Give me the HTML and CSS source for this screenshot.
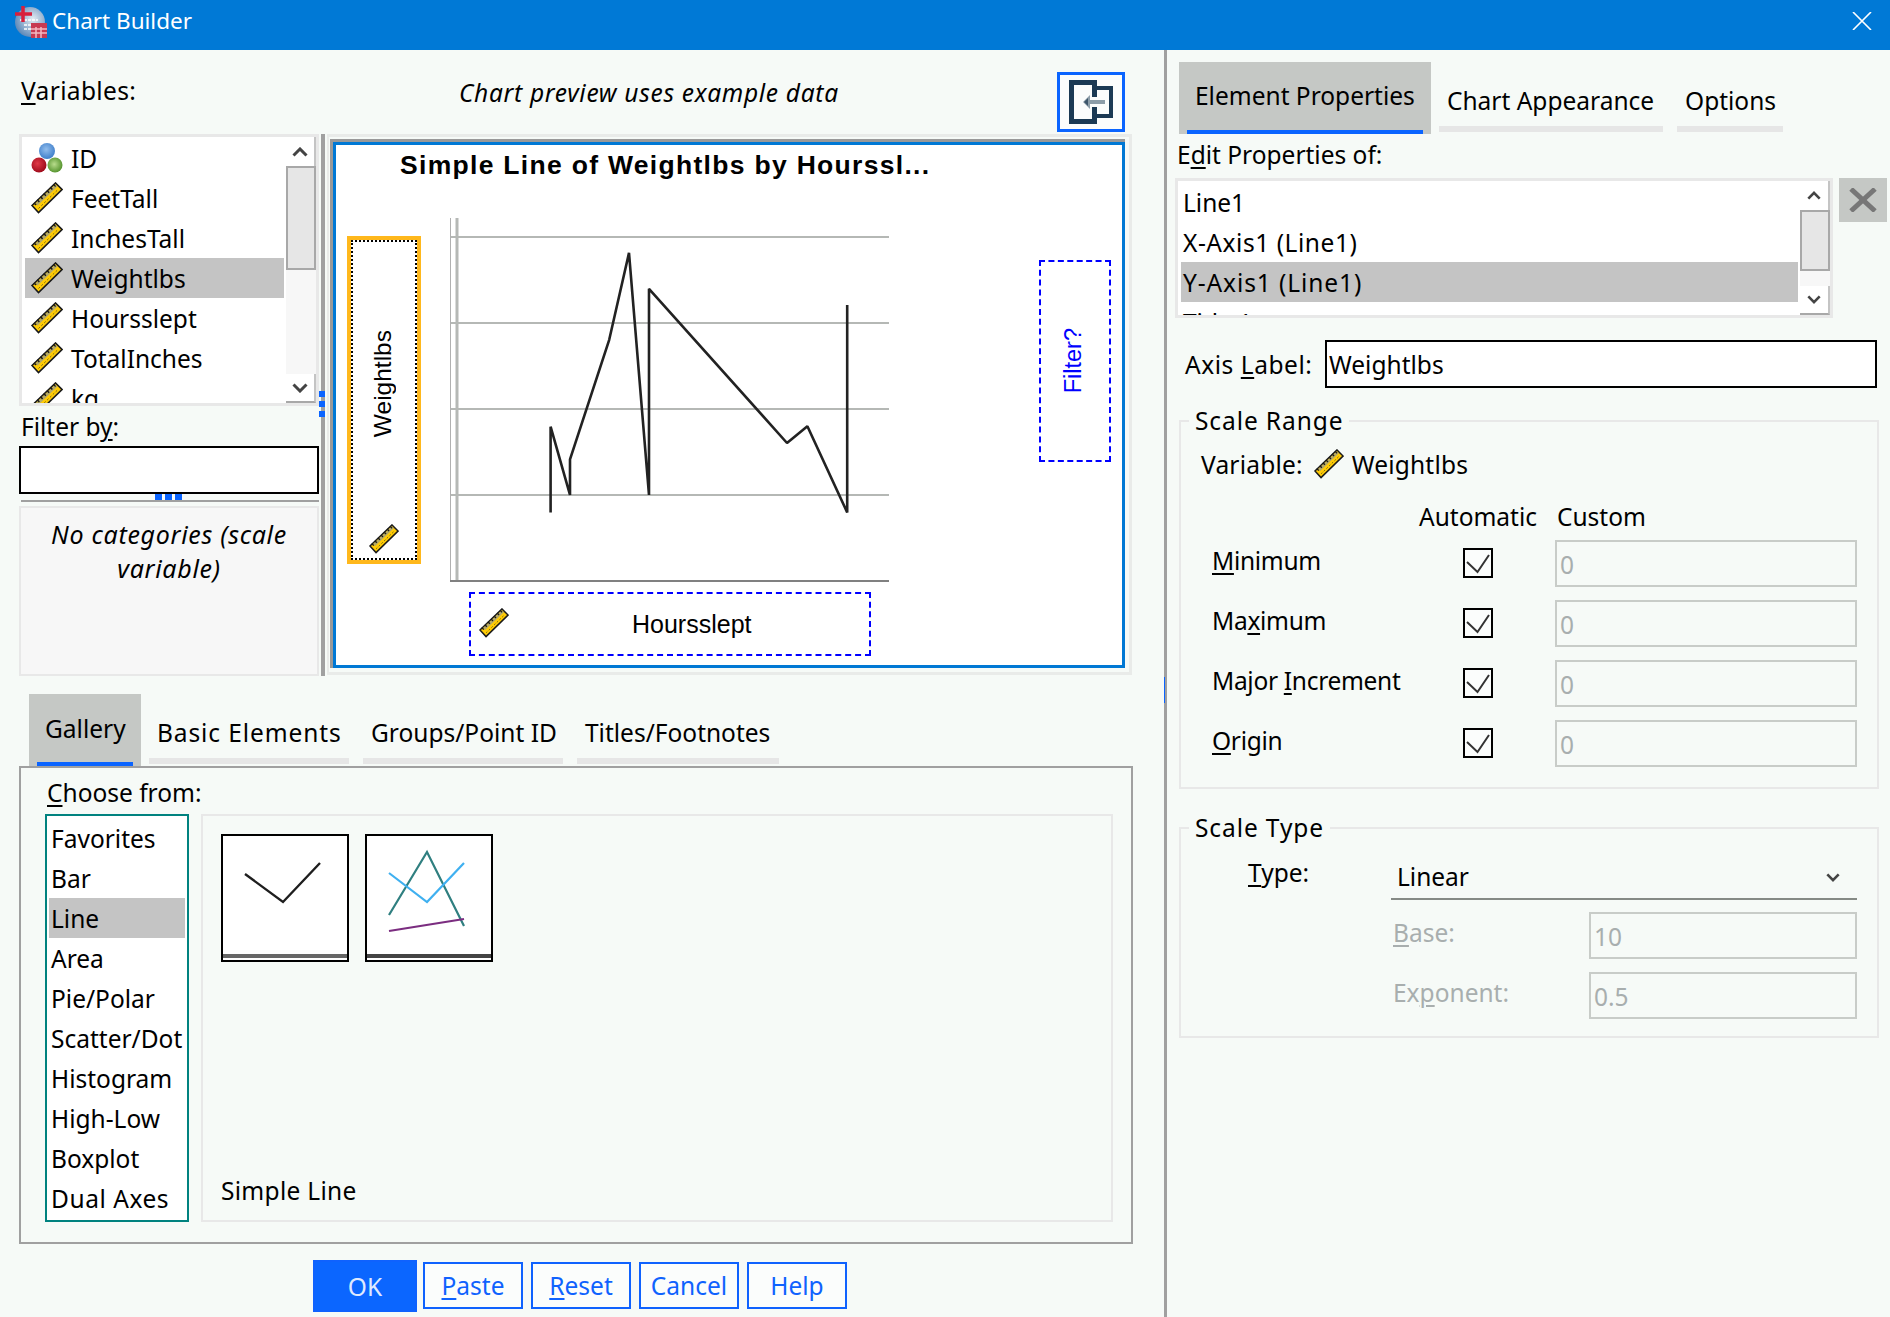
FILE: index.html
```html
<!DOCTYPE html>
<html lang="en">
<head>
    <meta charset="UTF-8">
    <title>Chart Builder</title>
    <link rel="stylesheet" href="styles.css">
</head>
<body>
    <!-- Iconos compartidos -->
    <svg class="defs" width="0" height="0">
        <defs>
            <symbol id="ruler" viewBox="0 0 32 32">
                <polygon points="1,23.5 24.5,1 31,7.5 7.5,30.5" fill="#ffcb05" stroke="#1a1a1a" stroke-width="1.6"/>
                <line x1="5.5" y1="22.5" x2="25.5" y2="3.5" stroke="#b3a868" stroke-width="3"/>
                <line x1="3.5" y1="22.5" x2="24" y2="3" stroke="#1a1a1a" stroke-width="3" stroke-dasharray="1.5 3"/>
                <line x1="7.5" y1="26.5" x2="27" y2="7.5" stroke="#7a6a10" stroke-width="1" stroke-dasharray="2 2"/>
            </symbol>
            <symbol id="chev-up" viewBox="0 0 16 10">
                <path d="M1.5 8.5 L8 2 L14.5 8.5" fill="none" stroke="#444" stroke-width="3"/>
            </symbol>
            <symbol id="chev-down" viewBox="0 0 16 10">
                <path d="M1.5 1.5 L8 8 L14.5 1.5" fill="none" stroke="#444" stroke-width="3"/>
            </symbol>
            <radialGradient id="ball-blue" cx="0.45" cy="0.4" r="0.6">
                <stop offset="0" stop-color="#92bdec"/><stop offset="1" stop-color="#3f7fcb"/>
            </radialGradient>
            <radialGradient id="ball-red" cx="0.4" cy="0.4" r="0.6">
                <stop offset="0" stop-color="#e03a48"/><stop offset="1" stop-color="#a00c1c"/>
            </radialGradient>
            <radialGradient id="ball-green" cx="0.45" cy="0.45" r="0.6">
                <stop offset="0" stop-color="#b8dc8c"/><stop offset="1" stop-color="#4f8f28"/>
            </radialGradient>
            <radialGradient id="globe" cx="0.6" cy="0.4" r="0.7">
                <stop offset="0" stop-color="#e4ecf2"/><stop offset="1" stop-color="#4f7eb2"/>
            </radialGradient>
        </defs>
    </svg>

    <header class="titlebar">
        <svg class="app-icon" width="34" height="34" viewBox="0 0 34 34">
            <circle cx="16" cy="18" r="15" fill="url(#globe)"/>
            <path d="M6 16h18M10 21h14M10 25h14" stroke="#fff" stroke-width="1.5" stroke-dasharray="3 1"/>
            <path d="M9 2v16M1 10h17" stroke="#d8203c" stroke-width="3.5"/>
            <rect x="17" y="19" width="16" height="15" fill="#c73a52"/>
            <path d="M17 25h16M17 29h16M22 23v11M27 23v11" stroke="#f3b9c2" stroke-width="1.5"/>
        </svg>
        <span class="app-title">Chart Builder</span>
        <svg class="close-x" width="20" height="18" viewBox="0 0 20 18">
            <path d="M1 0 L19 18 M19 0 L1 18" stroke="#fff" stroke-width="1.6"/>
        </svg>
    </header>

    <div class="dialog">
        <main class="left">
            <div class="left-top">
                <section class="vars">
                    <div class="vars-label"><u>V</u>ariables:</div>
                    <div class="listbox vars-list">
                        <ul class="rows">
                            <li>
                                <svg class="var-icon" width="32" height="32" viewBox="0 0 32 32">
                                    <circle cx="16" cy="9" r="8" fill="url(#ball-blue)"/>
                                    <circle cx="8" cy="23" r="7.5" fill="url(#ball-red)"/>
                                    <circle cx="24" cy="23" r="7.5" fill="url(#ball-green)"/>
                                </svg>ID</li>
                            <li><svg class="var-icon" width="32" height="32"><use href="#ruler"/></svg>FeetTall</li>
                            <li><svg class="var-icon" width="32" height="32"><use href="#ruler"/></svg>InchesTall</li>
                            <li class="selected"><svg class="var-icon" width="32" height="32"><use href="#ruler"/></svg>Weightlbs</li>
                            <li><svg class="var-icon" width="32" height="32"><use href="#ruler"/></svg>Hoursslept</li>
                            <li><svg class="var-icon" width="32" height="32"><use href="#ruler"/></svg>TotalInches</li>
                            <li><svg class="var-icon" width="32" height="32"><use href="#ruler"/></svg>kg</li>
                        </ul>
                        <div class="scrollbar">
                            <div class="sb-btn"><svg width="16" height="10"><use href="#chev-up"/></svg></div>
                            <div class="sb-thumb vars-thumb"></div>
                            <div class="sb-track"></div>
                            <div class="sb-btn sb-btn-down"><svg width="16" height="10"><use href="#chev-down"/></svg></div>
                        </div>
                    </div>
                    <div class="filter-label">Filter b<u>y</u>:</div>
                    <div class="text-input filter-input"></div>
                    <div class="h-split"><span class="dots"><i></i><i></i><i></i></span></div>
                    <div class="categories">No categories (scale variable)</div>
                </section>

                <div class="v-split"><span class="dots dots-v"><i></i><i></i><i></i></span></div>

                <section class="preview-col">
                    <div class="preview-top">
                        <span class="preview-note">Chart preview uses example data</span>
                        <div class="collapse-btn">
                            <svg width="48" height="48" viewBox="0 0 48 48">
                                <path d="M27.5 19 V4.5 H4.5 V43.5 H27.5 V29" fill="none" stroke="#1b3a54" stroke-width="5"/>
                                <path d="M30 10 H44 V38 H30" fill="none" stroke="#1b3a54" stroke-width="4"/>
                                <path d="M38 24 H20" stroke="#8d9ea9" stroke-width="4"/>
                                <path d="M23 17 L16 24 L23 31 Z" fill="#8d9ea9"/>
                                <path d="M21 20 L17 24 L21 28 Z" fill="#3d566a"/>
                            </svg>
                        </div>
                    </div>
                    <div class="preview-frame">
                        <div class="preview-inner">
                            <div class="canvas">
                                <svg class="plot" width="786" height="520" viewBox="336 145 786 520">
                                    <g stroke="#b5b8b5" stroke-width="2">
                                        <line x1="450" y1="237" x2="889" y2="237"/>
                                        <line x1="450" y1="323" x2="889" y2="323"/>
                                        <line x1="450" y1="409" x2="889" y2="409"/>
                                        <line x1="450" y1="495" x2="889" y2="495"/>
                                    </g>
                                    <line x1="450.5" y1="218" x2="450.5" y2="581" stroke="#b0b0b0" stroke-width="1"/>
                                    <line x1="457" y1="218" x2="457" y2="581" stroke="#b5b8b5" stroke-width="3"/>
                                    <line x1="450" y1="581" x2="889" y2="581" stroke="#808080" stroke-width="2"/>
                                    <polyline fill="none" stroke="#222" stroke-width="2.6" stroke-linejoin="bevel"
                                        points="550.6,512.4 550.6,426.7 570,494.9 570,459.4 609.2,339.8 629,252.9 649,494.9 649,288.8 787,443 807.4,426.3 847.2,512.4 847.2,305"/>
                                </svg>
                                <div class="chart-title">Simple Line of Weightlbs by Hourssl...</div>
                                <div class="y-zone">
                                    <div class="y-zone-inner">
                                        <span class="vtext y-label">Weightlbs</span>
                                        <svg class="y-ruler" width="30" height="30"><use href="#ruler"/></svg>
                                    </div>
                                </div>
                                <div class="filter-zone"><span class="vtext">Filter?</span></div>
                                <div class="x-zone">
                                    <svg width="30" height="30"><use href="#ruler"/></svg>
                                    <span class="x-label">Hoursslept</span>
                                </div>
                            </div>
                        </div>
                    </div>
                </section>
            </div>

            <nav class="tabs gallery-tabs">
                <div class="tab active"><span>Gallery</span></div>
                <div class="tab t-basic sp-1">Basic Elements</div>
                <div class="tab t-groups">Groups/Point ID</div>
                <div class="tab t-titles">Titles/Footnotes</div>
            </nav>

            <section class="panel">
                <div class="choose-label"><u>C</u>hoose from:</div>
                <div class="choose-row">
                    <ul class="type-list">
                        <li>Favorites</li>
                        <li>Bar</li>
                        <li class="selected">Line</li>
                        <li>Area</li>
                        <li>Pie/Polar</li>
                        <li>Scatter/Dot</li>
                        <li>Histogram</li>
                        <li>High-Low</li>
                        <li>Boxplot</li>
                        <li class="sp-05">Dual Axes</li>
                    </ul>
                    <div class="gallery">
                        <div class="thumbs">
                            <div class="thumb">
                                <svg width="124" height="118" viewBox="0 0 124 118">
                                    <polyline points="22,38 60,66 97,27" fill="none" stroke="#1e1e1e" stroke-width="2.4"/>
                                </svg>
                                <div class="thumb-bar"></div>
                            </div>
                            <div class="thumb">
                                <svg width="124" height="118" viewBox="0 0 124 118">
                                    <polyline points="22,79 60,16 97,90" fill="none" stroke="#2f7f80" stroke-width="2.2"/>
                                    <polyline points="22,37 60,66 97,27" fill="none" stroke="#3fb0f0" stroke-width="2.2"/>
                                    <line x1="22" y1="95" x2="97" y2="83" stroke="#7b2d80" stroke-width="2.2"/>
                                </svg>
                                <div class="thumb-bar thumb-bar-dark"></div>
                            </div>
                        </div>
                        <div class="gallery-caption">Simple Line</div>
                    </div>
                </div>
            </section>

            <div class="actions">
                <button class="btn btn-primary">OK</button>
                <button class="btn"><u>P</u>aste</button>
                <button class="btn"><u>R</u>eset</button>
                <button class="btn">Cancel</button>
                <button class="btn">Help</button>
            </div>
        </main>

        <aside class="right">
            <span class="right-grip"></span>
            <nav class="tabs props-tabs">
                <div class="tab active"><span>Element Properties</span></div>
                <div class="tab t-appearance">Chart Appearance</div>
                <div class="tab t-options">Options</div>
            </nav>
            <div class="edit-label">E<u>d</u>it Properties of:</div>
            <div class="edit-row">
                <div class="listbox props-list">
                    <ul class="rows">
                        <li>Line1</li>
                        <li class="sp-05">X-Axis1 (Line1)</li>
                        <li class="selected sp-1">Y-Axis1 (Line1)</li>
                        <li>Title 1</li>
                    </ul>
                    <div class="scrollbar">
                        <div class="sb-btn"><svg width="14" height="9"><use href="#chev-up"/></svg></div>
                        <div class="sb-thumb props-thumb"></div>
                        <div class="sb-track"></div>
                        <div class="sb-btn sb-btn-down"><svg width="14" height="9"><use href="#chev-down"/></svg></div>
                    </div>
                </div>
                <div class="delete-btn">
                    <svg width="30" height="24" viewBox="0 0 30 24">
                        <path d="M3 1 L27 23 M27 1 L3 23" stroke="#777" stroke-width="5"/>
                    </svg>
                </div>
            </div>
            <div class="axis-row">
                <label class="axis-label sp-05">Axis <u>L</u>abel:</label>
                <div class="text-input axis-input">Weightlbs</div>
            </div>

            <fieldset class="group range-group">
                <legend class="sp-1">Scale Range</legend>
                <div class="variable-row">
                    <span>Variable:</span>
                    <svg width="30" height="30"><use href="#ruler"/></svg>
                    <span>Weightlbs</span>
                </div>
                <div class="range-head">
                    <span class="head-auto">Automatic</span>
                    <span>Custom</span>
                </div>
                <div class="range-grid">
                    <span class="range-name"><u>M</u>inimum</span>
                    <span class="check"><svg width="26" height="26" viewBox="0 0 26 26"><path d="M2 12 L12.5 22 L24 5" fill="none" stroke="#333" stroke-width="2"/></svg></span>
                    <div class="off-input">0</div>
                    <span class="range-name">Ma<u>x</u>imum</span>
                    <span class="check"><svg width="26" height="26" viewBox="0 0 26 26"><path d="M2 12 L12.5 22 L24 5" fill="none" stroke="#333" stroke-width="2"/></svg></span>
                    <div class="off-input">0</div>
                    <span class="range-name">Major <u>I</u>ncrement</span>
                    <span class="check"><svg width="26" height="26" viewBox="0 0 26 26"><path d="M2 12 L12.5 22 L24 5" fill="none" stroke="#333" stroke-width="2"/></svg></span>
                    <div class="off-input">0</div>
                    <span class="range-name"><u>O</u>rigin</span>
                    <span class="check"><svg width="26" height="26" viewBox="0 0 26 26"><path d="M2 12 L12.5 22 L24 5" fill="none" stroke="#333" stroke-width="2"/></svg></span>
                    <div class="off-input">0</div>
                </div>
            </fieldset>

            <fieldset class="group type-group">
                <legend class="sp-1">Scale Type</legend>
                <div class="type-row">
                    <span class="type-label"><u>T</u>ype:</span>
                    <div class="select">
                        <span>Linear</span>
                        <svg width="14" height="9"><use href="#chev-down"/></svg>
                    </div>
                </div>
                <div class="sub-row">
                    <span class="disabled"><u>B</u>ase:</span>
                    <div class="off-input">10</div>
                </div>
                <div class="sub-row">
                    <span class="disabled">Ex<u>p</u>onent:</span>
                    <div class="off-input">0.5</div>
                </div>
            </fieldset>
        </aside>
    </div>
</body>
</html>
```

FILE: styles.css
```css
/* Estilos generales */
html, body {
    margin: 0;
    padding: 0;
    height: 100%;
    overflow: hidden;
}

body {
    font-family: "Noto Sans", "Open Sans", sans-serif;
    font-size: 24.5px;
    color: #000;
    background-color: #f6faf7;
}

ul {
    list-style: none;
    margin: 0;
    padding: 0;
}

u {
    text-underline-offset: 3px;
    text-decoration-thickness: 2px;
}

.defs {
    position: absolute;
}

/* Ajustes de ancho de texto */
.sp-05 {
    letter-spacing: 0.55px;
}

.sp-1 {
    letter-spacing: 0.9px;
}

/* Barra de titulo */
.titlebar {
    height: 50px;
    background-color: #0079d6;
    color: #fff;
    display: flex;
    align-items: center;
    padding-left: 14px;
    padding-right: 18px;
}

.app-icon {
    margin-top: -8px;
}

.app-title {
    margin-left: 4px;
    font-size: 22.5px;
    margin-top: -9px;
}

.close-x {
    margin-left: auto;
    margin-top: -8px;
}

.dialog {
    display: flex;
    height: 1267px;
}

/* Panel izquierdo */
.left {
    width: 1164px;
    flex: none;
}

.left-top {
    display: flex;
    padding-left: 19px;
}

.vars {
    width: 300px;
    flex: none;
}

.vars-label {
    height: 84px;
    line-height: 82px;
    padding-left: 2px;
    letter-spacing: 0.35px;
}

.listbox {
    display: flex;
    background-color: #fff;
    border: 3px solid #e8e8e8;
    box-sizing: border-box;
    overflow: hidden;
}

.rows {
    flex: 1;
    min-width: 0;
    overflow: hidden;
}

.rows li {
    height: 40px;
    box-sizing: border-box;
    padding-top: 1px;
    display: flex;
    align-items: center;
    white-space: nowrap;
}

.rows li.selected {
    background-color: #c4c4c4;
}

.vars-list {
    height: 272px;
}

.vars-list .rows {
    padding: 1px 2px 0 3px;
}

.var-icon {
    margin: -1px 8px 0 6px;
    flex: none;
}

/* Barra de desplazamiento */
.scrollbar {
    width: 30px;
    flex: none;
    display: flex;
    flex-direction: column;
    background-color: #f7f7f7;
}

.sb-btn {
    height: 29px;
    flex: none;
    background-color: #fff;
    display: flex;
    align-items: center;
    justify-content: center;
    border-right: 2px solid #c4c4c4;
    box-sizing: border-box;
}

.sb-btn-down {
    border-bottom: 2px solid #a8a8a8;
}

.sb-thumb {
    flex: none;
    background-color: #e6e6e6;
    border: 2px solid #a8a8a8;
}

.vars-thumb {
    height: 100px;
}

.props-thumb {
    height: 57px;
}

.sb-track {
    flex: 1;
}

.filter-label {
    height: 40px;
    line-height: 42px;
    padding-left: 2px;
}

.text-input {
    background-color: #fff;
    border: 2px solid #000;
    box-sizing: border-box;
    height: 48px;
    line-height: 46px;
    padding-left: 2px;
}

.h-split {
    height: 8px;
    margin-bottom: 4px;
    margin-left: 2px;
    border-bottom: 2px solid #a0a0a0;
    box-sizing: border-box;
    display: flex;
    justify-content: center;
}

.dots {
    display: flex;
    gap: 3px;
    height: 6px;
    margin-right: 4px;
}

.dots i {
    width: 7px;
    height: 6px;
    background-color: #0a64ff;
}

.categories {
    height: 170px;
    box-sizing: border-box;
    background-color: #f7f7f7;
    border: 2px solid #e8e8e8;
    padding: 9px 20px 0;
    text-align: center;
    font-style: italic;
    line-height: 34px;
    font-size: 25px;
    letter-spacing: 0.7px;
}

.v-split {
    width: 4px;
    height: 542px;
    margin: 84px 2px 0 2px;
    background-color: #a0a0a0;
    position: relative;
}

.dots-v {
    position: absolute;
    left: -2px;
    top: 257px;
    flex-direction: column;
    height: auto;
    gap: 4px;
    margin: 0;
}

.dots-v i {
    width: 6px;
}

.preview-col {
    width: 805px;
    flex: none;
}

.preview-top {
    height: 84px;
    box-sizing: border-box;
    padding: 22px 7px 0 132px;
    display: flex;
    align-items: flex-start;
}

.preview-note {
    font-style: italic;
    font-size: 24.5px;
    letter-spacing: 0.7px;
    line-height: 42px;
}

.collapse-btn {
    margin-left: auto;
    width: 68px;
    height: 60px;
    box-sizing: border-box;
    border: 3px solid #0a64ff;
    background-color: #fbfdfc;
    display: flex;
    align-items: center;
    justify-content: center;
}

.preview-frame {
    height: 541px;
    box-sizing: border-box;
    border: 3px solid #e9ebe9;
    border-left-width: 2px;
    padding: 2px 4px 4px 1px;
}

.preview-inner {
    height: 100%;
    box-sizing: border-box;
    border-top: 3px solid #999;
    border-left: 3px solid #999;
}

/* Vista previa del grafico */
.canvas {
    position: relative;
    height: 100%;
    box-sizing: border-box;
    background-color: #fff;
    border: 3px solid #0078d4;
    font-family: "Liberation Sans", Arial, sans-serif;
}

.plot {
    position: absolute;
    left: 0;
    top: 0;
}

.chart-title {
    position: absolute;
    left: 64px;
    top: 5px;
    font-weight: bold;
    font-size: 26.5px;
    line-height: 30px;
    letter-spacing: 1.3px;
    white-space: nowrap;
}

.vtext {
    writing-mode: vertical-rl;
    transform: rotate(180deg);
    white-space: nowrap;
}

.y-zone {
    position: absolute;
    left: 11px;
    top: 91px;
    width: 74px;
    height: 328px;
    box-sizing: border-box;
    border: 4px solid #ffb81c;
}

.y-zone-inner {
    height: 100%;
    box-sizing: border-box;
    margin: 0;
    border: 2px dotted #000;
    display: flex;
    flex-direction: column;
    align-items: center;
}

.y-label {
    margin-top: 88px;
    margin-right: 2px;
    font-size: 24.5px;
}

.y-ruler {
    margin-top: auto;
    margin-bottom: 4px;
}

.filter-zone {
    position: absolute;
    left: 703px;
    top: 115px;
    width: 72px;
    height: 202px;
    box-sizing: border-box;
    border: 2px dashed #0000ff;
    color: #0000ff;
    font-size: 23.5px;
    display: flex;
    align-items: center;
    justify-content: center;
    padding-right: 4px;
}

.x-zone {
    position: absolute;
    left: 133px;
    top: 447px;
    width: 402px;
    height: 64px;
    box-sizing: border-box;
    border: 2px dashed #0000ff;
    display: flex;
    align-items: center;
    padding-left: 8px;
    font-size: 25px;
}

.x-zone svg {
    margin-top: -2px;
}

.x-label {
    margin-left: 123px;
}

/* Pestanas */
.tabs {
    display: flex;
    align-items: flex-end;
    height: 72px;
}

.tab {
    flex: none;
    box-sizing: border-box;
    margin-bottom: 2px;
    border-bottom: 6px solid #e6e6e6;
    padding-left: 8px;
    line-height: 50px;
    height: 56px;
    white-space: nowrap;
}

.tab.active {
    height: 72px;
    margin-bottom: 0;
    border: 0;
    padding: 0 8px;
    background-color: #c5c8c5;
}

.tab.active span {
    display: block;
    height: 100%;
    box-sizing: border-box;
    border-bottom: 4px solid #0a64ff;
    padding-left: 8px;
    line-height: 68px;
}

.gallery-tabs {
    margin-top: 18px;
    padding-left: 29px;
}

.gallery-tabs .active {
    width: 112px;
}

.gallery-tabs .active span {
    line-height: 70px;
}

.t-basic {
    width: 200px;
    margin-left: 8px;
}

.t-groups {
    width: 200px;
    margin-left: 14px;
}

.t-titles {
    width: 202px;
    margin-left: 14px;
}

/* Panel de galeria */
.panel {
    margin-left: 19px;
    width: 1114px;
    height: 478px;
    box-sizing: border-box;
    border: 2px solid #a0a0a0;
}

.choose-label {
    height: 46px;
    line-height: 49px;
    padding-left: 26px;
}

.choose-row {
    display: flex;
    gap: 12px;
    padding-left: 24px;
    padding-right: 18px;
}

.type-list {
    width: 144px;
    height: 408px;
    flex: none;
    box-sizing: border-box;
    background-color: #fff;
    border: 2px solid #00827f;
    padding: 2px;
    overflow: hidden;
}

.type-list li {
    height: 40px;
    line-height: 42px;
    padding-left: 2px;
    white-space: nowrap;
}

.type-list li.selected {
    background-color: #c4c4c4;
}

.gallery {
    flex: 1;
    height: 408px;
    box-sizing: border-box;
    border: 2px solid #e8e8e8;
    padding: 18px 18px 9px;
    display: flex;
    flex-direction: column;
}

.thumbs {
    display: flex;
    gap: 16px;
}

.thumb {
    width: 128px;
    height: 128px;
    box-sizing: border-box;
    background-color: #fff;
    border: 2px solid #000;
}

.thumb svg {
    display: block;
}

.thumb-bar {
    height: 4px;
    background-color: #666;
}

.thumb-bar-dark {
    background-color: #444;
}

.gallery-caption {
    margin-top: auto;
    line-height: 40px;
    letter-spacing: 0.3px;
}

/* Botones */
.actions {
    display: flex;
    align-items: flex-start;
    gap: 8px;
    margin-top: 16px;
    padding-left: 313px;
}

.btn {
    width: 100px;
    height: 47px;
    margin-top: 2px;
    padding: 0;
    font: inherit;
    color: #0f62fe;
    background-color: #fbfdfc;
    border: 2px solid #0f62fe;
}

.btn-primary {
    width: 104px;
    height: 52px;
    margin-top: 0;
    margin-right: -2px;
    color: #dfe9ff;
    background-color: #0b66ff;
}

/* Panel derecho */
.right {
    flex: 1;
    border-left: 3px solid #a0a0a0;
    position: relative;
}

.right-grip {
    position: absolute;
    left: -3px;
    top: 627px;
    width: 1px;
    height: 26px;
    background-color: #0a64ff;
}

.props-tabs {
    margin-top: 12px;
    padding-left: 12px;
}

.props-tabs .active {
    width: 252px;
}

.t-appearance {
    width: 224px;
    margin-left: 8px;
}

.t-options {
    width: 106px;
    margin-left: 14px;
}

.edit-label {
    height: 44px;
    line-height: 42px;
    padding-left: 10px;
}

.edit-row {
    display: flex;
    gap: 6px;
    padding-left: 8px;
}

.props-list {
    width: 658px;
    height: 140px;
}

.props-list .rows {
    padding: 1px 2px 0 3px;
}

.props-list .rows li {
    padding-left: 2px;
}

.delete-btn {
    width: 48px;
    height: 44px;
    background-color: #c5c8c5;
    display: flex;
    align-items: center;
    justify-content: center;
}

.axis-row {
    display: flex;
    align-items: center;
    margin-top: 22px;
    padding-left: 18px;
}

.axis-label {
    width: 140px;
    flex: none;
}

.axis-input {
    width: 552px;
}

/* Grupos */
.group {
    margin: 15px 0 0 12px;
    padding: 0;
    width: 700px;
    box-sizing: border-box;
    border: 2px solid #e8e8e8;
}

.group legend {
    margin-left: 8px;
    padding: 0 6px;
    line-height: 36px;
}

.range-group {
    height: 386px;
}

.variable-row {
    display: flex;
    align-items: center;
    gap: 8px;
    height: 40px;
    margin-top: 5px;
    padding-left: 20px;
    letter-spacing: 0.2px;
}

.variable-row svg {
    margin-left: 3px;
}

.range-head {
    display: flex;
    height: 36px;
    line-height: 36px;
    margin: 15px 0 5px;
    padding-left: 238px;
}

.head-auto {
    width: 138px;
}

.range-grid {
    display: grid;
    grid-template-columns: 251px 92px 302px;
    grid-auto-rows: 47px;
    row-gap: 13px;
    padding-left: 31px;
}

.range-name {
    line-height: 42px;
    letter-spacing: -0.3px;
}

.check {
    width: 30px;
    height: 30px;
    box-sizing: border-box;
    background-color: #fbfdfc;
    border: 2px solid #000;
    align-self: center;
    margin-top: -1px;
}

.check svg {
    display: block;
}

.off-input {
    height: 47px;
    box-sizing: border-box;
    border: 2px solid #c8ccc8;
    color: #a8aeae;
    line-height: 46px;
    padding-left: 3px;
}

.type-group {
    margin-top: 21px;
    height: 228px;
}

.type-row {
    display: flex;
    height: 44px;
    margin-top: 10px;
    padding-left: 67px;
}

.type-label {
    width: 143px;
    line-height: 34px;
}

.select {
    width: 466px;
    box-sizing: border-box;
    border-bottom: 2px solid #858a85;
    display: flex;
    align-items: center;
    justify-content: space-between;
    padding: 0 17px 0 6px;
}

.select span {
    line-height: 42px;
}

.sub-row {
    display: grid;
    grid-template-columns: 196px 268px;
    padding-left: 212px;
    margin-top: 13px;
}

.type-row + .sub-row {
    margin-top: 12px;
}

.disabled {
    color: #a8aeae;
    line-height: 42px;
}
```
